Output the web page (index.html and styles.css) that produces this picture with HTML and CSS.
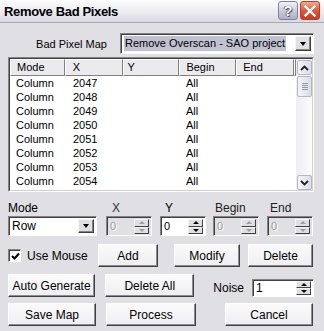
FILE: index.html
```html
<!DOCTYPE html>
<html>
<head>
<meta charset="utf-8">
<link rel="stylesheet" href="styles.css">
</head>
<body>
<div class="win">
  <div class="titlebar">
    <span class="title">Remove Bad Pixels</span>
    <div class="tbtns">
      <span class="tb help">?</span>
      <span class="tb close"><svg width="12" height="12" viewBox="0 0 12 12"><path d="M1.5 1.5 L10.5 10.5 M10.5 1.5 L1.5 10.5" stroke="#fff" stroke-width="2.4" stroke-linecap="square"/></svg></span>
    </div>
  </div>
  <div class="content">
    <div class="maprow">
      <span class="lbl">Bad Pixel Map</span>
      <div class="combo wide">
        <div class="cval"><span class="sel">Remove Overscan - SAO project</span></div>
        <span class="ddb"><i class="tri-d"></i></span>
      </div>
    </div>

    <div class="list">
      <div class="list-in">
        <div class="lmain">
          <div class="lhead">
            <span class="hc w1">Mode</span><span class="hc w2">X</span><span class="hc w3">Y</span><span class="hc w4">Begin</span><span class="hc w5">End</span><span class="hc fill"></span>
          </div>
          <div class="row"><span class="c w1">Column</span><span class="c w2">2047</span><span class="c w3"></span><span class="c w4">All</span></div>
          <div class="row"><span class="c w1">Column</span><span class="c w2">2048</span><span class="c w3"></span><span class="c w4">All</span></div>
          <div class="row"><span class="c w1">Column</span><span class="c w2">2049</span><span class="c w3"></span><span class="c w4">All</span></div>
          <div class="row"><span class="c w1">Column</span><span class="c w2">2050</span><span class="c w3"></span><span class="c w4">All</span></div>
          <div class="row"><span class="c w1">Column</span><span class="c w2">2051</span><span class="c w3"></span><span class="c w4">All</span></div>
          <div class="row"><span class="c w1">Column</span><span class="c w2">2052</span><span class="c w3"></span><span class="c w4">All</span></div>
          <div class="row"><span class="c w1">Column</span><span class="c w2">2053</span><span class="c w3"></span><span class="c w4">All</span></div>
          <div class="row"><span class="c w1">Column</span><span class="c w2">2054</span><span class="c w3"></span><span class="c w4">All</span></div>
        </div>
        <div class="vscroll">
          <span class="sbtn"><svg width="9" height="6" viewBox="0 0 9 6"><path d="M1 5 L4.5 1.5 L8 5" fill="none" stroke="#222" stroke-width="1.8"/></svg></span>
          <span class="thumb"><i></i><i></i><i></i><i></i></span>
          <span class="track"></span>
          <span class="sbtn"><svg width="9" height="6" viewBox="0 0 9 6"><path d="M1 1 L4.5 4.5 L8 1" fill="none" stroke="#222" stroke-width="1.8"/></svg></span>
        </div>
      </div>
    </div>

    <div class="fields">
      <div class="field fmode">
        <span class="flbl">Mode</span>
        <div class="combo mode">
          <div class="cval">Row</div>
          <span class="ddb"><i class="tri-d"></i></span>
        </div>
      </div>
      <div class="field fx">
        <span class="flbl">X</span>
        <div class="spin dis"><span class="sval">0</span><span class="sbs"><span class="sb"><i class="tri-u"></i></span><span class="sb"><i class="tri-d"></i></span></span></div>
      </div>
      <div class="field fy">
        <span class="flbl">Y</span>
        <div class="spin"><span class="sval">0</span><span class="sbs"><span class="sb"><i class="tri-u"></i></span><span class="sb"><i class="tri-d"></i></span></span></div>
      </div>
      <div class="field fbegin">
        <span class="flbl">Begin</span>
        <div class="spin dis"><span class="sval">0</span><span class="sbs"><span class="sb"><i class="tri-u"></i></span><span class="sb"><i class="tri-d"></i></span></span></div>
      </div>
      <div class="field fend">
        <span class="flbl">End</span>
        <div class="spin dis"><span class="sval">0</span><span class="sbs"><span class="sb"><i class="tri-u"></i></span><span class="sb"><i class="tri-d"></i></span></span></div>
      </div>
    </div>

    <div class="brow r1">
      <label class="chk">
        <span class="box"><svg width="9" height="9" viewBox="0 0 9 9"><path d="M1 4 L3.5 6.5 L8 1.5" fill="none" stroke="#000" stroke-width="2"/></svg></span>
        <span>Use Mouse</span>
      </label>
      <span class="btn b-add">Add</span>
      <span class="btn b-mod">Modify</span>
      <span class="btn b-del">Delete</span>
    </div>

    <div class="brow r2">
      <span class="btn b-wide">Auto Generate</span>
      <span class="btn b-wide2">Delete All</span>
      <div class="noise">
        <span>Noise</span>
        <div class="spin nspin"><span class="sval">1</span><span class="sbs"><span class="sb"><i class="tri-u"></i></span><span class="sb"><i class="tri-d"></i></span></span></div>
      </div>
    </div>

    <div class="brow r3">
      <span class="btn b-wide">Save Map</span>
      <span class="btn b-wide2">Process</span>
      <span class="btn b-cancel">Cancel</span>
    </div>
  </div>
</div>
</body>
</html>
```
FILE: styles.css
```css
html, body {
  margin: 0;
  padding: 0;
}
body {
  width: 324px;
  height: 331px;
  overflow: hidden;
  background: #e0dfe3;
  font: 11px "Liberation Sans", Arial, sans-serif;
  color: #000;
}
.win {
  width: 324px;
  height: 331px;
}
.titlebar {
  height: 22px;
  display: flex;
  align-items: flex-start;
  justify-content: space-between;
  padding: 0 4px 0 4px;
  background: linear-gradient(#fdfdfe, #ebebf0 55%, #d9d9e2);
  border-bottom: 1px solid #a8a8b8;
}
.title {
  font-weight: bold;
  font-size: 13px;
  letter-spacing: -0.35px;
  line-height: 14px;
  margin-top: 5px;
  color: #000;
}
.tbtns {
  display: flex;
  gap: 2px;
  margin-top: 1px;
}
.tb {
  width: 20px;
  height: 19px;
  box-sizing: border-box;
  border-radius: 3px;
  display: flex;
  align-items: center;
  justify-content: center;
}
.help {
  border: 1px solid #80829a;
  background: linear-gradient(#f2f2f8, #c4c6d6 60%, #aeb0c6);
  color: #fff;
  font-weight: bold;
  font-size: 14px;
  text-shadow: 0 0 1px #4a4c66, 1px 1px 0 #5a5c78, -1px 0 0 #6a6c88;
}
.close {
  border: 1px solid #b04028;
  background: linear-gradient(#f6a890, #e0583c 50%, #c83c20);
}
.content {
  padding: 10px 10px 0 8px;
}
.maprow {
  display: flex;
  justify-content: flex-end;
  align-items: center;
  gap: 13px;
  height: 21px;
}
.combo {
  display: flex;
  box-sizing: border-box;
  background: #fff;
  border: 1px solid;
  border-color: #848484 #fff #fff #848484;
  box-shadow: inset 1px 1px 0 #404040;
  padding: 2px 2px 2px 2px;
  align-items: stretch;
}
.combo.wide {
  width: 194px;
  height: 21px;
}
.cval {
  flex: 1;
  display: flex;
  align-items: center;
  padding-left: 1px;
  white-space: nowrap;
  overflow: hidden;
}
.sel {
  background: #c0c2d2;
  line-height: 15px;
  padding: 0 1px;
}
.ddb {
  width: 16px;
  box-sizing: border-box;
  background: #e0dfe3;
  border: 1px solid;
  border-color: #f4f4f4 #404040 #404040 #f4f4f4;
  box-shadow: inset -1px -1px 0 #848484;
  display: flex;
  align-items: center;
  justify-content: center;
}
.tri-d {
  width: 0;
  height: 0;
  border-left: 3.5px solid transparent;
  border-right: 3.5px solid transparent;
  border-top: 4px solid #000;
}
.tri-u {
  width: 0;
  height: 0;
  border-left: 3px solid transparent;
  border-right: 3px solid transparent;
  border-bottom: 3px solid #000;
}

/* list view */
.list {
  margin-top: 3px;
  width: 306px;
  height: 135px;
  box-sizing: border-box;
  border: 1px solid;
  border-color: #848484 #fff #fff #848484;
}
.list-in {
  height: 100%;
  box-sizing: border-box;
  border: 1px solid;
  border-color: #404040 #d4d0c8 #d4d0c8 #404040;
  background: #fff;
  display: flex;
}
.lmain {
  flex: 1;
  overflow: hidden;
}
.lhead {
  display: flex;
  height: 17px;
}
.hc {
  box-sizing: border-box;
  height: 17px;
  line-height: 15px;
  padding-left: 6px;
  background: #ebebee;
  border: 1px solid;
  border-color: #fff #808080 #808080 #fff;
  white-space: nowrap;
}
.w1 { width: 55px; }
.w2 { width: 58px; padding-left: 7px; }
.w3 { width: 57px; padding-left: 4px; }
.w4 { width: 57px; }
.w5 { width: 58px; }
.fill { flex: 1; padding: 0; }
.row {
  display: flex;
  height: 14px;
  line-height: 14px;
}
.c {
  box-sizing: border-box;
  padding-left: 6px;
  white-space: nowrap;
}
.row .w2 { padding-left: 8px; }

/* scrollbar */
.vscroll {
  width: 16px;
  display: flex;
  flex-direction: column;
  background: linear-gradient(to right, #eeeef3, #fbfbfd);
  padding: 1px 0 0 1px;
  box-sizing: border-box;
}
.sbtn, .thumb {
  box-sizing: border-box;
  width: 15px;
  border: 1px solid #b4b6c8;
  border-radius: 2px;
  background: linear-gradient(to right, #f4f4f8, #dcdce8);
  display: flex;
  align-items: center;
  justify-content: center;
}
.sbtn {
  height: 15px;
}
.thumb {
  height: 21px;
  margin-top: 1px;
  flex-direction: column;
  gap: 1px;
}
.thumb i {
  display: block;
  width: 6px;
  height: 1px;
  background: #9496ac;
}
.track {
  flex: 1;
}

/* fields */
.fields {
  display: flex;
  margin-top: 9px;
}
.field {
  display: flex;
  flex-direction: column;
}
.flbl {
  height: 15px;
  line-height: 15px;
  font-size: 12px;
}
.fmode { width: 89px; }
.fx { width: 46px; margin-left: 9px; }
.fx .flbl { padding-left: 6px; color: #333; }
.fy { width: 46px; margin-left: 8px; }
.fy .flbl { padding-left: 5px; }
.fbegin { width: 46px; margin-left: 7px; }
.fbegin .flbl { padding-left: 2px; color: #222; }
.fend { width: 46px; margin-left: 8px; }
.fend .flbl { padding-left: 3px; color: #222; }
.combo.mode {
  height: 20px;
  font-size: 12px;
}
.spin {
  display: flex;
  height: 20px;
  box-sizing: border-box;
  border: 1px solid;
  border-color: #848484 #fff #fff #848484;
  box-shadow: inset 1px 1px 0 #404040;
  background: #fff;
  padding: 2px 2px 1px 2px;
}
.spin.dis {
  background: #e0dfe3;
}
.sval {
  flex: 1;
  padding-left: 1px;
  line-height: 15px;
}
.dis .sval {
  color: #a0a0a0;
  text-shadow: 1px 1px 0 #fff;
}
.sbs {
  width: 15px;
  display: flex;
  flex-direction: column;
}
.sb {
  flex: 1;
  box-sizing: border-box;
  background: #e0dfe3;
  border: 1px solid;
  border-color: #f4f4f4 #404040 #404040 #f4f4f4;
  display: flex;
  align-items: center;
  justify-content: center;
}
.sb .tri-d {
  border-left-width: 3px;
  border-right-width: 3px;
  border-top-width: 3px;
}
.dis .tri-u { border-bottom-color: #a0a0a0; }
.dis .tri-d { border-top-color: #a0a0a0; }

/* button rows */
.brow {
  display: flex;
  align-items: center;
  height: 23px;
}
.r1 { margin-top: 8px; }
.r2 { margin-top: 7px; }
.r3 { margin-top: 6px; }
.btn {
  box-sizing: border-box;
  height: 23px;
  display: flex;
  align-items: center;
  justify-content: center;
  background: linear-gradient(#fafafa, #efeff2);
  border: 1px solid;
  border-color: #fff #404040 #404040 #fff;
  box-shadow: inset -1px -1px 0 #8c8c94;
  font-size: 12px;
  white-space: nowrap;
}
.chk {
  width: 90px;
  display: flex;
  align-items: center;
  gap: 6px;
  font-size: 12px;
}
.box {
  width: 13px;
  height: 13px;
  box-sizing: border-box;
  border: 1px solid;
  border-color: #848484 #fff #fff #848484;
  box-shadow: inset 1px 1px 0 #404040;
  background: #fff;
  display: flex;
  align-items: center;
  justify-content: center;
}
.box svg { margin: 1px 0 0 1px; }
.b-add { width: 60px; }
.b-mod { width: 66px; margin-left: 16px; }
.b-del { width: 65px; margin-left: 8px; }
.b-wide { width: 88px; }
.b-wide2 { width: 90px; margin-left: 10px; }
.b-cancel { width: 88px; margin-left: 29px; }
.noise {
  display: flex;
  align-items: center;
  margin-left: 19px;
  margin-top: 5px;
  font-size: 12px;
}
.nspin {
  width: 62px;
  height: 18px;
  margin-left: 8px;
  padding: 1px 2px 1px 2px;
  font-size: 12px;
}
```
